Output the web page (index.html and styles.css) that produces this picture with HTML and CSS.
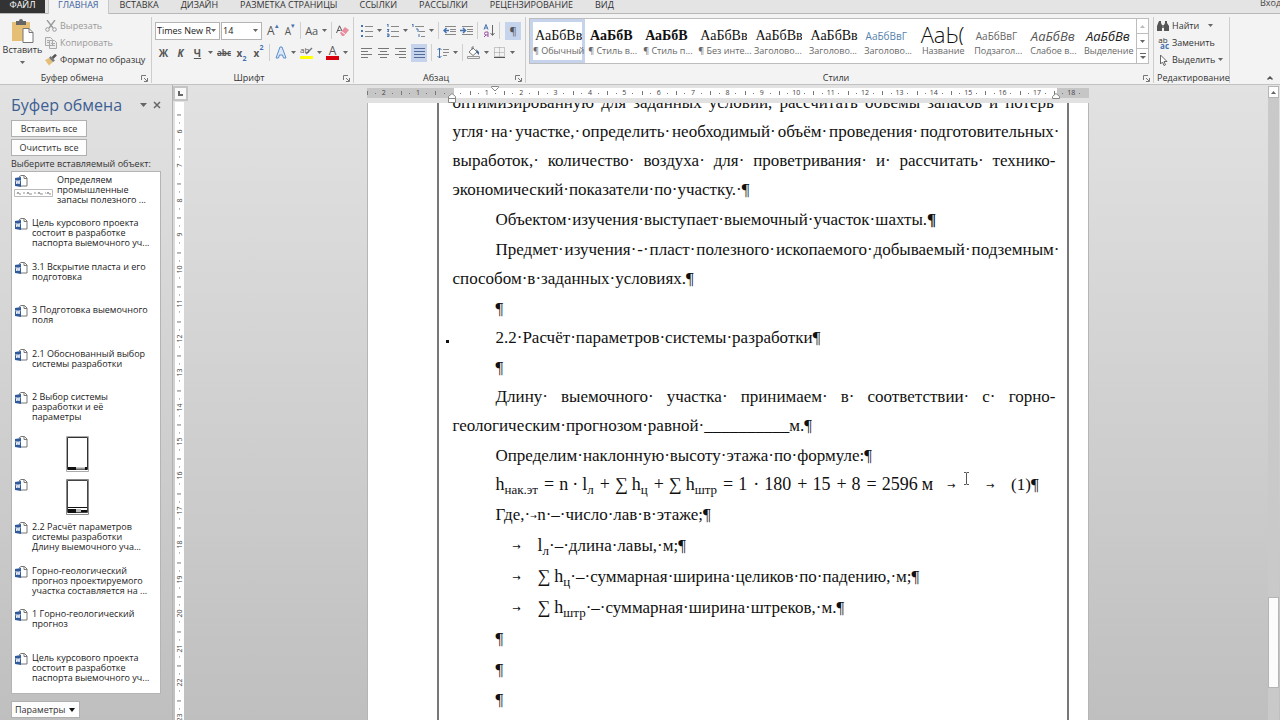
FILE: index.html
```html
<!DOCTYPE html>
<html lang="ru">
<head>
<meta charset="utf-8">
<title>Документ</title>
<link rel="stylesheet" href="styles.css">
</head>
<body>
<svg class="defs" aria-hidden="true">
  <symbol id="launch" viewBox="0 0 7 7"><path d="M.5 5V.5H5M3 3l3 3M6.500 3v3.500H3" fill="none" stroke="#777"/></symbol>
  <symbol id="down" viewBox="0 0 5 3"><path d="M0 0h5L2.500 3z" fill="#666"/></symbol>
  <symbol id="worddoc" viewBox="0 0 14 14"><path d="M5 2l2-1.500h3.500L13 3v8H7M10 .5v3h3" fill="#fff" stroke="#777"/><path d="M1 3l6-1v10l-6-1z" fill="#2f5a9b"/><path d="M2 5l.8 4L4 5.500 5 9l1-4" fill="none" stroke="#fff" stroke-width=".9"/></symbol>
</svg>
<div class="app">
  <nav class="tabs">
    <button class="tab file">ФАЙЛ</button>
    <button class="tab active">ГЛАВНАЯ</button>
    <button class="tab">ВСТАВКА</button>
    <button class="tab">ДИЗАЙН</button>
    <button class="tab">РАЗМЕТКА СТРАНИЦЫ</button>
    <button class="tab">ССЫЛКИ</button>
    <button class="tab">РАССЫЛКИ</button>
    <button class="tab">РЕЦЕНЗИРОВАНИЕ</button>
    <button class="tab">ВИД</button>
    <a class="login" href="#">Вход</a>
  </nav>

  <header class="ribbon">
    <section class="group clip-group">
      <div class="body">
        <button class="paste"><svg width="24" height="24" viewBox="0 0 24 24"><path d="M1 3h18v19H1z" fill="#e6bf77"/><path d="M5 2h3a2 2 0 0 1 4 0h3v4H5z" fill="#666"/><path d="M12 9.500h6l4 4v10H12z" fill="#fff" stroke="#777"/><path d="M18 9.500v4h4" fill="none" stroke="#777"/></svg><span>Вставить</span><svg class="dn"><use href="#down"/></svg></button>
        <div class="col">
          <button class="cmd off"><svg width="12" height="12" viewBox="0 0 12 12"><path d="M2 0l6 8M10 0L4 8" stroke="#999" stroke-width="1.300"/><g fill="none" stroke="#999"><circle cx="2.500" cy="9.500" r="1.800"/><circle cx="9.500" cy="9.500" r="1.800"/></g></svg>Вырезать</button>
          <button class="cmd off"><svg width="12" height="12" viewBox="0 0 12 12"><path d="M.5.5h5l2 2v6h-7zM4.500 3.500h5l2 2v6h-7z" fill="#eee" stroke="#aaa"/><path d="M6 6.500h4M6 8.500h4M2 3.500h2M2 5.500h2" stroke="#aaa"/></svg>Копировать</button>
          <button class="cmd"><svg width="12" height="12" viewBox="0 0 12 12"><path d="M0 6l4-2 4 4-4 3.500z" fill="#e6bf77"/><path d="M4 4l1.500-2L10 6.500 8 8z" fill="#777"/><path d="M7.500 4L11 .7" stroke="#555" stroke-width="2.500"/></svg>Формат по образцу</button>
        </div>
      </div>
      <footer><span>Буфер обмена</span><button class="launch" aria-label="Параметры буфера"><svg><use href="#launch"/></svg></button></footer>
    </section>

    <section class="group font-group">
      <div class="body rows">
        <div class="row">
          <div class="combo face"><select aria-label="Шрифт"><option>Times New R</option></select><svg class="dn"><use href="#down"/></svg></div>
          <div class="combo size"><select aria-label="Размер"><option>14</option></select><svg class="dn"><use href="#down"/></svg></div>
          <button class="t grow">A<sup>▴</sup></button><button class="t shrink">A<sup>▾</sup></button>
          <i class="sep"></i><button class="t aa">Aa <svg class="dn"><use href="#down"/></svg></button><i class="sep"></i>
          <button class="t"><svg width="13" height="12" viewBox="0 0 13 12"><path d="M.5 8L3.500.8 6 6M1.500 5.500h3" fill="none" stroke="#555"/><path d="M4 8l5-6 4 3-5 6H6z" fill="#e88da0"/><path d="M5.500 6.500l4 3" stroke="#fff"/></svg></button>
        </div>
        <div class="row second">
          <button class="t b">Ж</button><button class="t b it">К</button><button class="t b un">Ч</button><svg class="dn"><use href="#down"/></svg><button class="t st">abc</button><button class="t b">x<sub>2</sub></button><button class="t b">x<sup>2</sup></button>
          <i class="sep"></i>
          <button class="t"><svg width="12" height="13" viewBox="0 0 12 13"><path d="M1 12L5 1h2l4 11H8.500l-1-3h-3l-1 3z" fill="#dce8f7" stroke="#5b8fce"/></svg></button><svg class="dn"><use href="#down"/></svg>
          <button class="t mark"><span>ab</span><svg width="13" height="13" viewBox="0 0 13 13"><path d="M0 10h13v3H0z" fill="#ff0"/><path d="M6 8l6-6" stroke="#777" stroke-width="1.500"/></svg></button><svg class="dn"><use href="#down"/></svg>
          <button class="t color">A</button><svg class="dn"><use href="#down"/></svg>
        </div>
      </div>
      <footer><span>Шрифт</span><button class="launch" aria-label="Параметры шрифта"><svg><use href="#launch"/></svg></button></footer>
    </section>

    <section class="group par-group">
      <div class="body rows">
        <div class="row">
          <button class="t"><svg width="12" height="13" viewBox="0 0 12 13"><g fill="#4472b0"><path d="M0 1h2v2H0zM0 6h2v2H0zM0 11h2v2H0z"/></g><path d="M4 2.500h8M4 7.500h8M4 12.500h8" stroke="#888"/></svg></button><svg class="dn"><use href="#down"/></svg>
          <button class="t"><svg width="12" height="13" viewBox="0 0 12 13"><path d="M0 1l1-1v3M0 5.500h2L.5 7.500H2M0 10h2v2.500H0M0 11h2" fill="none" stroke="#4472b0"/><path d="M4 2.500h8M4 7.500h8M4 12.500h8" stroke="#888"/></svg></button><svg class="dn"><use href="#down"/></svg>
          <button class="t"><svg width="13" height="13" viewBox="0 0 13 13"><path d="M0 1l1-1v3M4 5h2v3M7 10v3" fill="none" stroke="#4472b0"/><path d="M3 2.500h9M7 7.500h6M9 12.500h4" stroke="#888"/></svg></button><svg class="dn"><use href="#down"/></svg>
          <i class="sep"></i>
          <button class="t"><svg width="13" height="11" viewBox="0 0 13 11"><path d="M2 1.500h11M7 4.500h6M7 6.500h6M2 9.500h11" stroke="#888"/><path d="M6 5.500H1M3.500 3L1 5.500 3.500 8" fill="none" stroke="#4472b0" stroke-width="1.500"/></svg></button>
          <button class="t"><svg width="13" height="11" viewBox="0 0 13 11"><path d="M2 1.500h11M7 4.500h6M7 6.500h6M2 9.500h11" stroke="#888"/><path d="M0 5.500h5M3 3l2.500 2.500L3 8" fill="none" stroke="#4472b0" stroke-width="1.500"/></svg></button>
          <i class="sep"></i>
          <button class="t"><svg width="12" height="13" viewBox="0 0 12 13"><path d="M1 5.500L3 .5l2 5M1.500 4h3" fill="none" stroke="#4472b0"/><path d="M5 13V8H3a1.500 1.500 0 0 0 0 3h2M3 11l-2 2" fill="none" stroke="#9b4fa5"/><path d="M9.500 1v10M7.500 9l2 2.500 2-2.500" fill="none" stroke="#666"/></svg></button>
          <i class="sep"></i>
          <button class="t on pil">¶</button>
        </div>
        <div class="row second">
          <button class="t"><svg width="11" height="10" viewBox="0 0 11 10"><path d="M0 .5h11M0 3.500h7M0 6.500h11M0 9.500h7" stroke="#777"/></svg></button>
          <button class="t"><svg width="11" height="10" viewBox="0 0 11 10"><path d="M0 .5h11M2 3.500h7M0 6.500h11M2 9.500h7" stroke="#777"/></svg></button>
          <button class="t"><svg width="11" height="10" viewBox="0 0 11 10"><path d="M0 .5h11M4 3.500h7M0 6.500h11M4 9.500h7" stroke="#777"/></svg></button>
          <button class="t on"><svg width="11" height="10" viewBox="0 0 11 10"><path d="M0 .5h11M0 3.500h11M0 6.500h11M0 9.500h11" stroke="#536b96"/></svg></button>
          <i class="sep"></i>
          <button class="t"><svg width="12" height="12" viewBox="0 0 12 12"><path d="M2.500 1v10M.5 3l2-2 2 2M.5 9l2 2 2-2" fill="none" stroke="#4472b0"/><path d="M6 2.500h6M6 5.500h6M6 8.500h4" stroke="#888"/></svg></button><svg class="dn"><use href="#down"/></svg>
          <i class="sep"></i>
          <button class="t"><svg width="13" height="13" viewBox="0 0 13 13"><path d="M2 6l4-4 4 4-4 3.500zM5 4V1h2" fill="#fff" stroke="#777"/><path d="M9 3l3 3v3l-2-2z" fill="#3f6697"/><path d="M.5 10.500h12v2H.5z" fill="#eee" stroke="#999"/></svg></button><svg class="dn"><use href="#down"/></svg>
          <button class="t"><svg width="11" height="11" viewBox="0 0 11 11"><path d="M.5.5h10v9H.5zM5.500.5v9M.5 5.500h10" fill="none" stroke="#999" stroke-dasharray="1 1"/><path d="M0 10.500h11" stroke="#555"/></svg></button><svg class="dn"><use href="#down"/></svg>
        </div>
      </div>
      <footer><span>Абзац</span><button class="launch" aria-label="Параметры абзаца"><svg><use href="#launch"/></svg></button></footer>
    </section>

    <section class="group styles-group">
      <div class="body">
        <div class="gallery">
          <button class="style sel"><span class="pv">АаБбВв</span><span class="nm">¶ Обычный</span></button>
          <button class="style"><span class="pv bold">АаБбВ</span><span class="nm">¶ Стиль в...</span></button>
          <button class="style"><span class="pv bold">АаБбВ</span><span class="nm">¶ Стиль п...</span></button>
          <button class="style"><span class="pv">АаБбВв</span><span class="nm">¶ Без инте...</span></button>
          <button class="style"><span class="pv">АаБбВв</span><span class="nm">Заголово...</span></button>
          <button class="style"><span class="pv">АаБбВв</span><span class="nm">Заголово...</span></button>
          <button class="style"><span class="pv sans blue">АаБбВвГ</span><span class="nm">Заголово...</span></button>
          <button class="style"><span class="pv title">АаЬ(</span><span class="nm">Название</span></button>
          <button class="style"><span class="pv sans">АаБбВвГ</span><span class="nm">Подзагол...</span></button>
          <button class="style"><span class="pv ital">АаБбВв</span><span class="nm">Слабое в...</span></button>
          <button class="style"><span class="pv ital dark">АаБбВв</span><span class="nm">Выделение</span></button>
          <div class="gscroll">
            <button class="dim" aria-label="Вверх"><svg width="5" height="3" viewBox="0 0 5 3"><path d="M0 3h5L2.500 0z" fill="#bbb"/></svg></button>
            <button aria-label="Вниз"><svg class="dn"><use href="#down"/></svg></button>
            <button aria-label="Все стили"><svg width="6" height="6" viewBox="0 0 6 6"><path d="M0 .5h6" stroke="#666"/><path d="M0 3h6L3 6z" fill="#666"/></svg></button>
          </div>
        </div>
      </div>
      <footer><span>Стили</span><button class="launch" aria-label="Окно стилей"><svg><use href="#launch"/></svg></button></footer>
    </section>

    <section class="group edit-group">
      <div class="body">
        <div class="col">
          <button class="cmd"><svg width="12" height="12" viewBox="0 0 12 12"><path d="M2 1h2v2l1 2v6H0V6zM8 1h2v2l2 3v5H7V5l1-2z" fill="#555"/><path d="M5 5h2v3H5z" fill="#777"/></svg>Найти<svg class="dn far"><use href="#down"/></svg></button>
          <button class="cmd"><span class="abac"><span>ab</span><b>ac</b></span>Заменить</button>
          <button class="cmd"><svg width="12" height="12" viewBox="0 0 12 12"><path d="M3.500 1v9l2-2 1.500 3.500 1.500-.7L7 7.500h3z" fill="#fff" stroke="#666"/></svg>Выделить<svg class="dn"><use href="#down"/></svg></button>
        </div>
      </div>
      <footer><span>Редактирование</span></footer>
    </section>
    <button class="collapse" aria-label="Свернуть ленту"><svg width="6" height="4" viewBox="0 0 6 4"><path d="M.5 3.500L3 1l2.500 2.500" fill="none" stroke="#555" stroke-width="1.500"/></svg></button>
  </header>

  <main class="work">
    <aside class="pane">
      <div class="pane-head"><h2>Буфер обмена</h2>
        <button aria-label="Меню"><svg width="7" height="4" viewBox="0 0 7 4"><path d="M0 0h7L3.500 4z" fill="#666"/></svg></button>
        <button aria-label="Закрыть"><svg width="8" height="8" viewBox="0 0 8 8"><path d="M1 1l6 6M7 1L1 7" stroke="#666" stroke-width="1.500"/></svg></button></div>
      <button class="pbtn">Вставить все</button>
      <button class="pbtn">Очистить все</button>
      <p class="hint">Выберите вставляемый объект:</p>
      <ul class="clips">
        <li><div class="with-eq"><svg class="wd"><use href="#worddoc"/></svg><svg class="eq" width="39" height="8" viewBox="0 0 39 8"><path d="M.5.5h38v7H.5z" fill="#fff" stroke="#bbb"/><path d="M3 5l1-2 1 2h2M9 4h2M13 5l1-2 1 2h3M20 4h2M24 5l1-2 1 2h3M31 4h1M33 5l1-2 1 2h2" fill="none" stroke="#777" stroke-width=".8"/></svg></div><span>Определяем<br>промышленные<br>запасы полезного ...</span></li>
        <li><svg class="wd"><use href="#worddoc"/></svg><span>Цель курсового проекта<br>состоит в разработке<br>паспорта выемочного уч...</span></li>
        <li><svg class="wd"><use href="#worddoc"/></svg><span>3.1 Вскрытие пласта и его<br>подготовка</span></li>
        <li><svg class="wd"><use href="#worddoc"/></svg><span>3 Подготовка выемочного<br>поля</span></li>
        <li><svg class="wd"><use href="#worddoc"/></svg><span>2.1 Обоснованный выбор<br>системы разработки</span></li>
        <li><svg class="wd"><use href="#worddoc"/></svg><span>2 Выбор системы<br>разработки и её<br>параметры</span></li>
        <li><svg class="wd"><use href="#worddoc"/></svg><svg class="thumb" width="23" height="36" viewBox="0 0 23 36"><path d="M.5.500h22v35H.5z" fill="#fff" stroke="#aaa"/><path d="M1.500 1.500h20v32h-20z" fill="none" stroke="#333"/><path d="M2 31h8v3H2zM19 31h2v3h-2z" fill="#111"/><path d="M10 31.500h9v2h-9z" fill="#999"/></svg></li>
        <li><svg class="wd"><use href="#worddoc"/></svg><svg class="thumb" width="23" height="36" viewBox="0 0 23 36"><path d="M.5.500h22v35H.5z" fill="#fff" stroke="#888"/><path d="M1.500 1.500h20v32h-20z" fill="none" stroke="#444"/><path d="M2 28h19v1H2zM2 30h8v4H2zM15 31h6v2h-6z" fill="#111"/><path d="M10 30h5v3h-5z" fill="#bbb"/></svg></li>
        <li><svg class="wd"><use href="#worddoc"/></svg><span>2.2 Расчёт параметров<br>системы разработки<br>Длину выемочного уча...</span></li>
        <li><svg class="wd"><use href="#worddoc"/></svg><span>Горно-геологический<br>прогноз проектируемого<br>участка составляется на ...</span></li>
        <li><svg class="wd"><use href="#worddoc"/></svg><span>1 Горно-геологический<br>прогноз</span></li>
        <li><svg class="wd"><use href="#worddoc"/></svg><span>Цель курсового проекта<br>состоит в разработке<br>паспорта выемочного уч...</span></li>
      </ul>
      <button class="params">Параметры <svg width="6" height="4" viewBox="0 0 6 4"><path d="M0 0h6L3 4z" fill="#111"/></svg></button>
    </aside>

    <div class="vcol">
      <button class="tabsel" aria-label="Табуляция"><svg width="5" height="5" viewBox="0 0 5 5"><path d="M1 0v4h4" fill="none" stroke="#666" stroke-width="2"/></svg></button>
      <div class="vwin"><div class="vruler">
        <span>6</span><span>7</span><span>8</span><span>9</span><span>10</span><span>11</span><span>12</span><span>13</span><span>14</span><span>15</span><span>16</span><span>17</span><span>18</span><span>19</span><span>20</span><span>21</span><span>22</span><span>23</span>
      </div></div>
    </div>

    <div class="canvas">
      <div class="hruler">
        <span>2</span><span>1</span><span></span><span>1</span><span>2</span><span>3</span><span>4</span><span>5</span><span>6</span><span>7</span><span>8</span><span>9</span><span>10</span><span>11</span><span>12</span><span>13</span><span>14</span><span>15</span><span>16</span><span>17</span><span>18</span>
        <svg class="mk first" width="8" height="6" viewBox="0 0 8 6"><path d="M.5.5h7v1L4 5 .5 1.500z" fill="#fff" stroke="#888"/></svg>
        <svg class="mk left" width="8" height="10" viewBox="0 0 8 10"><path d="M.5 9.500v-6L4 .5l3.500 3v6zM.5 5.500h7" fill="#fff" stroke="#888"/></svg>
        <svg class="mk right" width="8" height="6" viewBox="0 0 8 6"><path d="M.5 5.500v-2L4 .5l3.500 3v2z" fill="#fff" stroke="#888"/></svg>
      </div>
      <article class="page">
        <div class="frame">
          <div class="doc">
            <p><span class="j"><span>оптимизированную·</span> <span>для·</span> <span>заданных·</span> <span>условий,·</span> <span>рассчитать·</span> <span>объёмы·</span> <span>запасов·</span> <span>и·</span> <span class="end">потерь·</span></span>
              <span class="j"><span>угля·</span> <span>на·</span> <span>участке,·</span> <span>определить·</span> <span>необходимый·</span> <span>объём·</span> <span>проведения·</span> <span class="end">подготовительных·</span></span>
              <span class="j"><span>выработок,·</span> <span>количество·</span> <span>воздуха·</span> <span>для·</span> <span>проветривания·</span> <span>и·</span> <span>рассчитать·</span> <span>технико-</span></span>
              <span class="l">экономический·показатели·по·участку.·¶</span></p>
            <p class="ind"><span class="l">Объектом·изучения·выступает·выемочный·участок·шахты.<b>¶</b></span></p>
            <p class="ind"><span class="j"><span>Предмет·</span> <span>изучения·</span> <span>-·</span> <span>пласт·</span> <span>полезного·</span> <span>ископаемого·</span> <span>добываемый·</span> <span class="end">подземным·</span></span>
              <span class="l">способом·в·заданных·условиях.¶</span></p>
            <p class="ind blank"><span class="l">¶</span></p>
            <p class="ind head"><span class="l">2.2·Расчёт·параметров·системы·разработки¶</span></p>
            <p class="ind blank"><span class="l">¶</span></p>
            <p class="ind"><span class="j"><span>Длину·</span> <span>выемочного·</span> <span>участка·</span> <span>принимаем·</span> <span>в·</span> <span>соответствии·</span> <span>с·</span> <span>горно-</span></span>
              <span class="l">геологическим·прогнозом·равной·__________м.¶</span></p>
            <p class="ind blank"><span class="l">Определим·наклонную·высоту·этажа·по·формуле:¶</span></p>
            <p class="ind formula"><span class="l"><span class="math">h<sub>нак.эт</sub><u>=</u>n<u class="mul">·</u>l<sub>л</sub><u>+</u>∑<em>h<sub>ц</sub></em><u>+</u>∑<em>h<sub>штр</sub></em><u>=</u>1<u>·</u>180<u>+</u>15<u>+</u>8<u>=</u>2596<em>м</em></span><span class="tb narrow">→</span><span class="tb">→</span>(1)¶</span></p>
            <p class="ind tall"><span class="l">Где,·<span class="tb mini">→</span>n·–·число·лав·в·этаже;¶</span></p>
            <p class="ind tall"><span class="l"><span class="tb">→</span><span class="math">l<sub>л</sub></span>·–·длина·лавы,·м;¶</span></p>
            <p class="ind tall"><span class="l"><span class="tb">→</span><span class="math">∑<em>h<sub>ц</sub></em></span>·–·суммарная·ширина·целиков·по·падению,·м;¶</span></p>
            <p class="ind tall"><span class="l"><span class="tb">→</span><span class="math">∑<em>h<sub>штр</sub></em></span>·–·суммарная·ширина·штреков,·м.¶</span></p>
            <p class="ind tall"><span class="l">¶</span></p>
            <p class="ind"><span class="l">¶</span></p>
            <p class="ind"><span class="l">¶</span></p>
          </div>
        </div>
      </article>
      <svg class="ibeam" width="7" height="13" viewBox="0 0 7 13"><path d="M1 .5h2l.5.5.5-.5h2M3.500 1v11M1 12.500h2l.5-.5.5.5h2" fill="none" stroke="#555"/></svg>
    </div>

    <div class="vscroll">
      <button aria-label="Прокрутить вверх"><svg width="5" height="3" viewBox="0 0 5 3"><path d="M0 3h5L2.500 0z" fill="#666"/></svg></button>
      <div class="track"><div class="handle"></div></div>
    </div>
  </main>
</div>
</body>
</html>
```

FILE: styles.css
```css
* { box-sizing: border-box; }
body { margin: 0; font-family: "Open Sans", "Noto Sans", sans-serif; font-size: 9px; color: #333; }
button { margin: 0; padding: 0; border: 0; background: none; font: inherit; color: inherit; }
h2, p, ul { margin: 0; padding: 0; font-weight: normal; }
svg { flex: none; }
.defs { position: absolute; width: 0; height: 0; }
.app { display: flex; flex-direction: column; height: 100vh; overflow: hidden; }
.dn { width: 5px; height: 3px; }

/* tabs */
.tabs { display: flex; height: 14px; background: #e4e4e4; border-bottom: 1px solid #b8b8b8; flex: none; }
.tab { height: 14px; padding: 0 11px 5px; line-height: 9px; white-space: nowrap; }
.tab.file { width: 45px; padding: 0 0 4px; background: #333; color: #fff; height: 13px; }
.tab.active { margin-left: 3px; padding: 0 9px 5px; background: #f3f3f3; border: solid #c8c8c8; border-width: 0 1px; color: #3d62a0; }
.login { margin-left: auto; color: #444; text-decoration: none; line-height: 6px; width: 20px; white-space: nowrap; overflow: hidden; }

/* ribbon */
.ribbon { display: flex; height: 71px; padding: 3px 0 1px; background: #f3f3f3; border-bottom: 1px solid #c2c2c2; flex: none; }
.group { display: flex; flex-direction: column; border-right: 1px solid #cdcdcd; flex: none; }
.body { display: flex; flex: 1; }
.group footer { display: flex; align-items: center; height: 10px; padding: 0 3px; }
.group footer span { flex: 1; text-align: center; line-height: 10px; white-space: nowrap; }
.launch { width: 7px; height: 7px; }
.launch svg { display: block; width: 7px; height: 7px; }
.clip-group { width: 152px; }
.font-group { width: 202px; }
.par-group { width: 172px; }
.styles-group { flex: 1; min-width: 0; }
.edit-group { width: 76px; }
.collapse { margin-left: auto; align-self: flex-end; padding: 0 7px 3px 37px; line-height: 4px; }
.paste { display: flex; flex-direction: column; align-items: center; width: 45px; padding-top: 2px; }
.paste span { line-height: 14px; }
.paste .dn { margin-top: 4px; }
.col { display: flex; flex-direction: column; }
.cmd { display: flex; align-items: center; gap: 3px; height: 17px; white-space: nowrap; }
.off { color: #999; }
.far { margin-left: 6px; }
.edit-group .col { padding-left: 3px; }
.abac { display: flex; flex-direction: column; width: 12px; font-size: 8px; line-height: 6px; }
.abac b { align-self: flex-end; color: #4472b0; }
.rows { flex-direction: column; padding: 4px 4px 0 3px; gap: 3px; }
.row { display: flex; align-items: center; height: 19px; gap: 4px; }
.font-group .second { padding-left: 2px; }
.combo { display: flex; align-items: center; height: 18px; border: 1px solid #b4b4b4; background: #fff; margin-right: -3px; }
.combo.face { width: 65px; }
.combo.size { width: 42px; margin-right: 0; }
.combo select { flex: 1; min-width: 0; padding: 0 0 0 1px; border: 0; background: none; appearance: none; font: inherit; color: #222; }
.combo .dn { margin-right: 3px; }
.t { display: flex; align-items: center; justify-content: center; min-width: 13px; height: 18px; font-size: 12px; color: #555; gap: 4px; }
.aa { font-size: 11px; }
.t sup, .t sub { font-size: 7px; line-height: 7px; color: #4472b0; margin-left: -4px; }
.t sup { align-self: flex-start; }
.t sub { align-self: flex-end; }
.shrink { font-size: 10px; }
.b { font-weight: bold; font-size: 10px; }
.it { font-style: italic; }
.un { text-decoration: underline; }
.st { font-size: 8px; font-weight: bold; text-decoration: line-through; min-width: 14px; }
.mark { position: relative; font-size: 8px; }
.mark span { position: absolute; left: 0; top: 1px; line-height: 9px; }
.color { border-bottom: 4px solid #d8000c; height: 14px; line-height: 10px; }
.sep { width: 1px; height: 17px; background: #cfcfcf; }
.on { background: #c5d3ec; min-width: 16px; }
.pil { font-size: 11px; margin-left: auto; }
.par-group .rows { padding-left: 6px; }
.styles-group .body { padding: 1px 4px 0 3px; }
.gallery { display: flex; flex: 1; height: 46px; min-width: 0; background: #fff; border: 1px solid #bdbdbd; }
.style { display: flex; flex-direction: column; flex: 1 1 0; min-width: 0; padding: 4px 1px; border: 2px solid transparent; }
.style.sel { border: 3px solid #c5d3ec; padding: 3px 0; }
.pv { width: 100%; height: 22px; padding-left: 2px; line-height: 22px; overflow: hidden; white-space: nowrap; text-align: left; font-family: "Liberation Serif", serif; font-size: 14px; color: #111; }
.pv.bold { font-weight: bold; }
.pv.sans { font-family: "Open Sans", sans-serif; font-size: 10px; color: #666; }
.pv.blue { color: #5582ad; }
.pv.title { font-family: "Open Sans", sans-serif; font-weight: 300; font-size: 22px; line-height: 18px; }
.pv.ital { font-family: "Open Sans", sans-serif; font-style: italic; font-size: 13px; color: #555; }
.pv.dark { color: #222; }
.nm { width: 100%; line-height: 12px; white-space: nowrap; text-align: center; color: #666; }
.gscroll { display: flex; flex-direction: column; width: 12px; border-left: 1px solid #bdbdbd; }
.gscroll button { display: flex; flex: 1; align-items: center; justify-content: center; }
.gscroll button + button { border-top: 1px solid #bdbdbd; }

/* workspace */
.work { display: flex; flex: 1; min-height: 0; background: linear-gradient(#e2e2e2, #bfbfbf); }
.pane { display: flex; flex-direction: column; align-items: flex-start; width: 173px; padding: 10px 11px 2px; border-right: 1px solid #b2b2b2; }
.pane-head { display: flex; align-items: center; gap: 6px; width: 100%; height: 20px; margin-bottom: 5px; }
.pane-head button { display: flex; }
.pane-head h2 { flex: 1; font-size: 16px; line-height: 20px; color: #3d5f93; white-space: nowrap; }
.pbtn { width: 76px; height: 17px; margin-bottom: 2px; border: 1px solid #b0b0b0; background: #fdfdfd; line-height: 14px; }
.hint { line-height: 12px; white-space: nowrap; }
.clips { display: grid; grid-auto-rows: 1fr; flex: 1; width: 150px; min-height: 0; margin-top: 1px; list-style: none; background: #fff; border: 1px solid #b4b4b4; line-height: 10px; color: #222; }
.clips li { display: flex; align-items: flex-start; gap: 4px; padding: 3px 0 0 2px; min-height: 0; white-space: nowrap; }
.wd { width: 14px; height: 14px; display: block; }
.with-eq { width: 39px; }
.with-eq .eq { display: block; }
.thumb { margin-left: 34px; }
.params { display: flex; align-items: center; gap: 4px; height: 17px; margin-top: 7px; padding: 0 4px 0 3px; border: 1px solid #b0b0b0; background: #fdfdfd; }
.vcol { display: flex; flex-direction: column; width: 15px; }
.tabsel { display: flex; align-items: center; justify-content: center; width: 15px; height: 15px; margin: 1px 0; border: 2px solid #c4c4c4; background: #f8f8f8; }
.vwin { flex: 1; width: 9px; margin-left: 2px; min-height: 0; background: #fff; overflow: hidden; }
.vruler { display: grid; grid-auto-rows: 1fr; height: 620px; margin-top: 12px; font-size: 7px; line-height: 9px; color: #444; }
.vruler span { display: flex; align-items: center; justify-content: center; writing-mode: vertical-rl; transform: rotate(180deg);
  background: linear-gradient(#777, #777) 50% 100% / 4px 1px no-repeat, linear-gradient(#777, #777) 50% 25% / 1px 1px no-repeat, linear-gradient(#777, #777) 50% 75% / 1px 1px no-repeat; }
.canvas { position: relative; display: flex; flex-direction: column; align-items: center; flex: 1; min-width: 0; }
.hruler { position: relative; display: grid; grid-auto-flow: column; grid-auto-columns: 1fr; width: 722px; height: 10px; margin: 3px 0 5px; flex: none; font-size: 7px; line-height: 10px; color: #444; background: linear-gradient(90deg, #c6c6c6 12%, #fff 12% 95%, #fff 95.500%, #c6c6c6 95.500%); }
.hruler span { text-align: center; background: linear-gradient(#777, #777) 0 50% / 1px 4px no-repeat, linear-gradient(#777, #777) 25% 50% / 1px 1px no-repeat, linear-gradient(#777, #777) 75% 50% / 1px 1px no-repeat; }
.mk { position: absolute; }
.mk.first { left: 124px; top: -2px; }
.mk.left { left: 81px; top: 5px; }
.mk.right { left: 685px; top: 5px; }
.page { flex: 1; width: 722px; min-height: 0; padding: 0 19px 0 69px; background: #fff; border: solid #b5b5b5; border-width: 0 1px; overflow: hidden; }
.frame { display: flow-root; height: 100%; padding: 0 11px 0 14px; border: solid #777; border-width: 0 2px; }
.doc { margin-top: -15px; font-family: "Liberation Serif", serif; font-size: 17px; line-height: 29px; color: #111; }
.doc p { padding-bottom: 1px; white-space: nowrap; }
.doc .blank { padding-bottom: 0; }
.l { display: block; }
.j { display: flex; justify-content: space-between; }
.end { margin-right: -4px; }
.ind > :first-child { padding-left: 43px; }
.head { position: relative; }
.head::before { content: ""; position: absolute; left: -7px; top: 17px; width: 3px; height: 3px; background: #111; }
.math { font-size: 18px; line-height: 20px; }
.math sub { font-size: 13px; line-height: 0; vertical-align: -4px; }
.math u { text-decoration: none; margin: 0 5px 0 6px; }
.math .mul { margin: 0 4px; }
.math em { font-style: normal; margin-left: 4px; }
.tb { display: inline-block; width: 42px; text-align: center; font-family: "DejaVu Sans", sans-serif; font-size: 10px; line-height: 10px; vertical-align: 1px; }
.tb.narrow { width: 36px; }
.tb.mini { width: 7px; font-size: 8px; }
.tall { line-height: 30px; }
.ibeam { position: absolute; left: 775px; top: 387px; }
.vscroll { display: flex; flex-direction: column; width: 13px; padding: 1px 1px 0; }
.vscroll button { display: flex; align-items: center; justify-content: center; height: 12px; border: 1px solid #b5b5b5; background: #fdfdfd; }
.track { display: flex; flex-direction: column; flex: 1; background: #c9c9c9; }
.handle { margin-top: 499px; height: 91px; background: #fbfbfb; border: 1px solid #b5b5b5; }
```
